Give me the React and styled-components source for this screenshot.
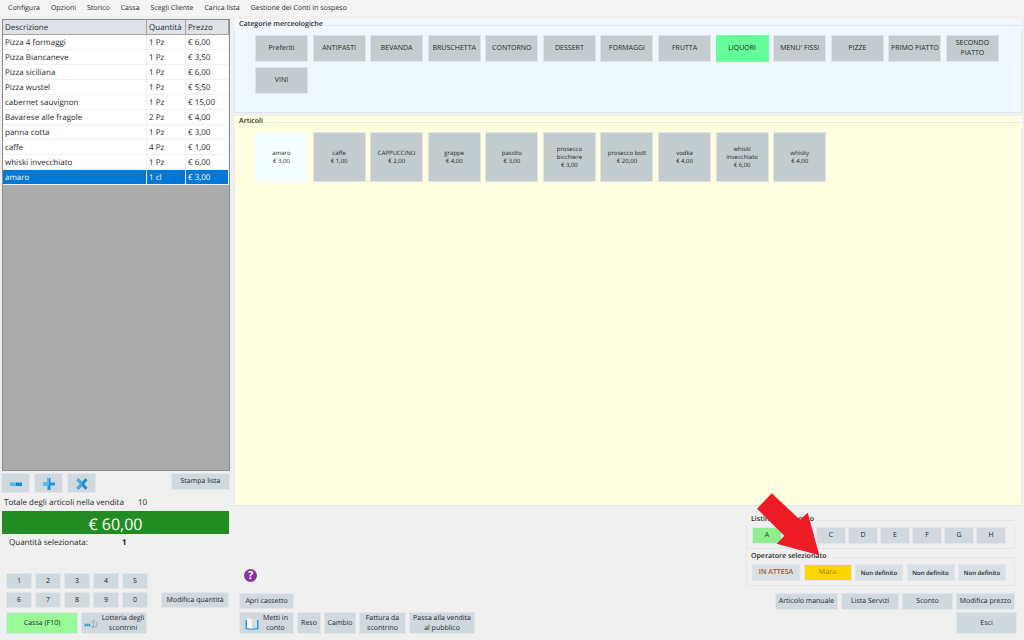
import { useState } from 'react';
import styled, { createGlobalStyle } from 'styled-components';

const GlobalStyle = createGlobalStyle`
  * {
    box-sizing: border-box;
  }

  body {
    margin: 0;
    background: #f0f0f0;
    color: #1e1e1e;
    font-family: 'Open Sans', 'Noto Sans', sans-serif;
    font-size: 7px;
    line-height: 9px;
    text-rendering: geometricPrecision;
  }

  button {
    font: inherit;
    color: inherit;
    text-rendering: inherit;
    padding: 0;
    border: none;
    cursor: pointer;
  }
`;

const Page = styled.div`
  min-height: 100vh;
  display: flex;
  flex-direction: column;
`;

const MenuBar = styled.nav`
  display: flex;
  gap: 11px;
  height: 16px;
  padding-left: 8px;
  background: #f4f4f4;
`;

const MenuButton = styled.button`
  padding-top: 1px;
  background: none;
`;

const Main = styled.div`
  flex: 1;
  display: grid;
  grid-template-columns: 230px 1fr;
  gap: 4px;
`;

const LeftColumn = styled.aside`
  display: flex;
  flex-direction: column;
  padding: 3px 0 6px 1px;
`;

const RightColumn = styled.main`
  display: flex;
  flex-direction: column;
  padding: 3px 2px 6px 0;
`;

const ListArea = styled.div`
  flex: 1;
  margin-left: 1px;
  background: #ababab;
  border: 1px solid #8c8c8c;
`;

const SaleTable = styled.table`
  width: 100%;
  table-layout: fixed;
  border-collapse: separate;
  border-spacing: 0;
  font-size: 8px;
  line-height: 12px;

  th {
    height: 15px;
    padding: 2px 2px 0;
    text-align: left;
    font-weight: normal;
    background: #dfe3e8;
    border-right: 1px solid #a0a0a0;
    border-bottom: 1px solid #a0a0a0;
  }

  td {
    height: 15px;
    padding: 2px 2px 0;
    white-space: nowrap;
    border-right: 1px solid #f0f0f0;
    border-bottom: 1px solid #f0f0f0;
  }
`;

const SaleRow = styled.tr`
  background: ${({ $selected }) => ($selected ? '#0078d7' : '#fff')};
  color: ${({ $selected }) => ($selected ? '#fff' : 'inherit')};
  cursor: pointer;
`;

const Button = styled.button`
  display: flex;
  align-items: center;
  justify-content: center;
  gap: 4px;
  width: ${({ $width }) => ($width ? `${$width}px` : 'auto')};
  height: ${({ $height }) => $height || 17}px;
  padding-top: 1px;
  background: ${({ $color }) => $color || '#cfd9de'};
  border: 1px solid #e0e6e9;
  line-height: 10px;
  white-space: nowrap;
`;

const OperatorButton = styled(Button)`
  color: ${({ $text }) => $text || 'inherit'};
  font-size: ${({ $small }) => ($small ? 6 : 7)}px;
  font-weight: 600;
`;

const Bar = styled.div`
  display: flex;
  gap: ${({ $gap }) => $gap || 3}px;
  align-items: flex-start;
`;

const Push = styled.div`
  margin-left: auto;
`;

const ListTools = styled(Bar)`
  padding-top: 2px;
`;

const Info = styled.div`
  display: flex;
  gap: 14px;
  padding: 3px 3px 1px;
  font-size: 8px;
  line-height: 14px;
`;

const Total = styled.output`
  display: block;
  height: 23px;
  margin: 0 1px;
  background: #228b22;
  color: #fff;
  text-align: center;
  font-size: 16px;
  line-height: 26px;
`;

const Quantity = styled.div`
  display: flex;
  gap: 34px;
  height: 39px;
  padding: 2px 8px;
  font-size: 8px;
  line-height: 14px;
`;

const KeypadRow = styled.div`
  display: flex;
  justify-content: space-between;
  align-items: flex-end;
  padding: 0 1px 4px 5px;
`;

const Keypad = styled.div`
  display: grid;
  grid-template-columns: repeat(5, 26px);
  gap: 3px;
`;

const CheckoutRow = styled(Bar)`
  padding-left: 5px;
`;

const Panel = styled.section`
  display: flex;
  flex-direction: column;
  flex: ${({ $grow }) => ($grow ? 1 : 'none')};
  margin-bottom: ${({ $grow }) => ($grow ? 0 : 3)}px;
  background: ${({ $color }) => $color || 'transparent'};
`;

const PanelTitle = styled.h2`
  display: flex;
  align-items: center;
  gap: 2px;
  margin: 0;
  padding-left: 5px;
  font-size: 7px;
  font-weight: 600;
  line-height: 12px;
  white-space: nowrap;

  &::after {
    content: '';
    flex: 1;
    border-top: 1px solid #e2e6e8;
  }
`;

const PanelBody = styled.div`
  flex: 1;
  border: solid #e2e6e8;
  border-width: 0 1px 1px;
  padding: ${({ $pad }) => $pad || '4px 22px 6px 20px'};
`;

const TileGrid = styled.div`
  display: grid;
  grid-template-columns: repeat(auto-fill, 53px);
  grid-auto-rows: ${({ $height }) => $height}px;
  row-gap: 5px;
  column-gap: calc((100% - 13 * 53px) / 12);
  min-height: ${({ $min }) => $min || 0}px;
`;

const Tile = styled.button`
  display: flex;
  flex-direction: column;
  align-items: center;
  justify-content: center;
  padding-top: 1px;
  background: ${({ $active, $accent }) => ($active ? $accent : '#c3cdcf')};
  border: 1px solid ${({ $active, $accent }) => ($active ? $accent : '#dde5e8')};
  line-height: 10px;
`;

const ArticleTile = styled(Tile)`
  padding: 0 3px;
  font-size: 6px;
  line-height: 8px;
`;

const Footer = styled.footer`
  display: flex;
  justify-content: space-between;
  align-items: flex-end;
  padding: 8px 5px 0;
`;

const Actions = styled.div`
  display: flex;
  flex-direction: column;
  align-items: flex-start;
  gap: 3px;
`;

const HelpButton = styled.button`
  width: 13px;
  height: 13px;
  margin: 0 0 8px 5px;
  border-radius: 50%;
  background: #9030a4;
  color: #fff;
  font-size: 11px;
  font-weight: 700;
  line-height: 13px;
`;

const Options = styled.div`
  position: relative;
  display: flex;
  flex-direction: column;
  align-items: flex-end;
  gap: 2px;
`;

const OptionPanel = styled(Panel)`
  width: 269px;
  margin: 0 2px 0 0;
`;

const OptionRow = styled(Bar)`
  justify-content: space-between;
`;

const PriceActions = styled(Bar)`
  padding: 5px 2px 0 0;
`;

const Arrow = styled.svg`
  position: absolute;
  left: 10px;
  top: -21px;
  width: 64px;
  height: 64px;
  pointer-events: none;
`;

const menus = ['Configura', 'Opzioni', 'Storico', 'Cassa', 'Scegli Cliente', 'Carica lista', 'Gestione dei Conti in sospeso'];

const sales = [
  ['Pizza 4 formaggi', '1 Pz', '€ 6,00'],
  ['Pizza Biancaneve', '1 Pz', '€ 3,50'],
  ['Pizza siciliana', '1 Pz', '€ 6,00'],
  ['Pizza wustel', '1 Pz', '€ 5,50'],
  ['cabernet sauvignon', '1 Pz', '€ 15,00'],
  ['Bavarese alle fragole', '2 Pz', '€ 4,00'],
  ['panna cotta', '1 Pz', '€ 3,00'],
  ['caffe', '4 Pz', '€ 1,00'],
  ['whiski invecchiato', '1 Pz', '€ 6,00'],
  ['amaro', '1 cl', '€ 3,00']
];

const categories = [
  'Preferiti', 'ANTIPASTI', 'BEVANDA', 'BRUSCHETTA', 'CONTORNO', 'DESSERT', 'FORMAGGI',
  'FRUTTA', 'LIQUORI', "MENU' FISSI", 'PIZZE', 'PRIMO PIATTO', 'SECONDO PIATTO', 'VINI'
];

const articles = [
  ['amaro', '€ 3,00'],
  ['caffe', '€ 1,00'],
  ['CAPPUCCINO', '€ 2,00'],
  ['grappe', '€ 4,00'],
  ['passito', '€ 3,00'],
  ['prosecco bicchiere', '€ 3,00'],
  ['prosecco bott', '€ 20,00'],
  ['vodka', '€ 4,00'],
  ['whiski invecchiato', '€ 6,00'],
  ['whisky', '€ 4,00']
];

const operators = ['IN ATTESA', 'Mara', 'Non definito', 'Non definito', 'Non definito'];

const MinusIcon = () => (
  <svg width="14" height="14" viewBox="0 0 14 14">
    <path d="M1 5.500h6v3.500H1z" fill="#55b9f3" />
    <path d="M7 5.500h6v3.500H7z" fill="#1687d9" />
  </svg>
);

const PlusIcon = () => (
  <svg width="14" height="14" viewBox="0 0 14 14">
    <path d="M1 5.500h4.500V1h3v4.500H13v3H8.500V13h-3V8.500H1z" fill="#1f93e0" />
    <path d="M1 5.500h4.500V1H7v7.500H1z" fill="#58b8ef" />
  </svg>
);

const CrossIcon = () => (
  <svg width="14" height="14" viewBox="0 0 14 14">
    <path d="M1.500 3.200l2-1.900L7 5l3.500-3.700 2 1.900L9 7l3.500 3.800-2 1.900L7 9l-3.500 3.700-2-1.900L5 7z" fill="#1687d9" />
    <path d="M1.500 3.200l2-1.900L7 5v4l-3.500 3.700-2-1.900L5 7z" fill="#45acec" />
  </svg>
);

const TextCursorIcon = () => (
  <svg width="14" height="10" viewBox="0 0 14 10">
    <path d="M.5 6h6" stroke="#3794d0" strokeWidth="2.500" strokeDasharray="1.700 .4" />
    <path d="M7 3.500h1.500M7 7.500h1.500M9.500 1.500v7M8.300 1.500h2.400M8.300 8.500h2.400M10.700 3.500h2.300v4h-2.300" fill="none" stroke="#8fa7b4" strokeWidth=".8" />
  </svg>
);

const BookIcon = () => (
  <svg width="14" height="14" viewBox="0 0 14 14">
    <path d="M.5 3v9.500H6l1 .7 1-.7h5.500V3z" fill="#2999dc" />
    <path d="M2 1.500C4 1 6 1.500 7 3v9C5.500 11 4 11 2 11.300z" fill="#f7fafb" />
    <path d="M12 1.500C10 1 8 1.500 7 3v9c1.500-1 3-1 5-.7z" fill="#d3dcdf" />
  </svg>
);

const App = () => {
  const [selectedRow, setSelectedRow] = useState(9);
  const [category, setCategory] = useState('LIQUORI');
  const [article, setArticle] = useState('amaro');
  const [priceList, setPriceList] = useState('A');

  return (
    <Page>
      <GlobalStyle />
      <MenuBar>
        {menus.map((menu) => (
          <MenuButton key={menu}>{menu}</MenuButton>
        ))}
      </MenuBar>
      <Main>
        <LeftColumn>
          <ListArea>
            <SaleTable>
              <colgroup>
                <col />
                <col width="39" />
                <col width="43" />
              </colgroup>
              <thead>
                <tr>
                  <th>Descrizione</th>
                  <th>Quantità</th>
                  <th>Prezzo</th>
                </tr>
              </thead>
              <tbody>
                {sales.map((row, index) => (
                  <SaleRow key={row[0]} $selected={index === selectedRow} onClick={() => setSelectedRow(index)}>
                    {row.map((cell) => (
                      <td key={cell}>{cell}</td>
                    ))}
                  </SaleRow>
                ))}
              </tbody>
            </SaleTable>
          </ListArea>
          <ListTools $gap={4}>
            <Button $width={29} $height={20} aria-label="Meno"><MinusIcon /></Button>
            <Button $width={29} $height={20} aria-label="Più"><PlusIcon /></Button>
            <Button $width={29} $height={20} aria-label="Elimina"><CrossIcon /></Button>
            <Push>
              <Button $width={59}>Stampa lista</Button>
            </Push>
          </ListTools>
          <Info>
            <span>Totale degli articoli nella vendita</span>
            <span>10</span>
          </Info>
          <Total>€ 60,00</Total>
          <Quantity>
            <span>Quantità selezionata:</span>
            <strong>1</strong>
          </Quantity>
          <KeypadRow>
            <Keypad>
              {[1, 2, 3, 4, 5, 6, 7, 8, 9, 0].map((key) => (
                <Button key={key} $height={16}>{key}</Button>
              ))}
            </Keypad>
            <Button $width={68} $height={16}>Modifica quantità</Button>
          </KeypadRow>
          <CheckoutRow>
            <Button $width={72} $height={22} $color="#98fb98">Cassa (F10)</Button>
            <Button $width={66} $height={22}>
              <TextCursorIcon />
              <span>Lotteria degli<br />scontrini</span>
            </Button>
          </CheckoutRow>
        </LeftColumn>
        <RightColumn>
          <Panel $color="#f0f8ff">
            <PanelTitle>Categorie merceologiche</PanelTitle>
            <PanelBody>
              <TileGrid $height={27} $min={71}>
                {categories.map((name) => (
                  <Tile key={name} $active={name === category} $accent="#66ff99" onClick={() => setCategory(name)}>
                    {name}
                  </Tile>
                ))}
              </TileGrid>
            </PanelBody>
          </Panel>
          <Panel $color="#ffffe0" $grow>
            <PanelTitle>Articoli</PanelTitle>
            <PanelBody>
              <TileGrid $height={50}>
                {articles.map(([name, price]) => (
                  <ArticleTile key={name} $active={name === article} $accent="#f5ffff" onClick={() => setArticle(name)}>
                    <span>{name}</span>
                    <span>{price}</span>
                  </ArticleTile>
                ))}
              </TileGrid>
            </PanelBody>
          </Panel>
          <Footer>
            <Actions>
              <HelpButton aria-label="Aiuto">?</HelpButton>
              <Button $width={55} $height={16}>Apri cassetto</Button>
              <Bar>
                <Button $width={55} $height={22}>
                  <BookIcon />
                  <span>Metti in<br />conto</span>
                </Button>
                <Button $width={24} $height={22}>Reso</Button>
                <Button $width={32} $height={22}>Cambio</Button>
                <Button $width={47} $height={22}>Fattura da<br />scontrino</Button>
                <Button $width={66} $height={22}>Passa alla vendita<br />al pubblico</Button>
              </Bar>
            </Actions>
            <Options>
              <OptionPanel>
                <PanelTitle>Listino selezionato</PanelTitle>
                <PanelBody $pad="1px 8px 4px 5px">
                  <OptionRow $gap={2}>
                    {['A', 'B', 'C', 'D', 'E', 'F', 'G', 'H'].map((name) => (
                      <Button
                        key={name}
                        $width={30}
                        $color={name === priceList ? '#90ee90' : undefined}
                        onClick={() => setPriceList(name)}
                      >
                        {name}
                      </Button>
                    ))}
                  </OptionRow>
                </PanelBody>
              </OptionPanel>
              <OptionPanel>
                <PanelTitle>Operatore selezionato</PanelTitle>
                <PanelBody $pad="1px 8px 4px 5px">
                  <OptionRow>
                    {operators.map((name, index) => (
                      <OperatorButton
                        key={index}
                        $width={48}
                        $small={index > 1}
                        $color={index === 1 ? '#ffd700' : '#d8e0e3'}
                        $text={['#a0522d', '#c8860b'][index]}
                      >
                        {name}
                      </OperatorButton>
                    ))}
                  </OptionRow>
                </PanelBody>
              </OptionPanel>
              <PriceActions>
                <Button $width={63}>Articolo manuale</Button>
                <Button $width={58}>Lista Servizi</Button>
                <Button $width={51}>Sconto</Button>
                <Button $width={59}>Modifica prezzo</Button>
              </PriceActions>
              <Button $width={61} $height={22}>Esci</Button>
              <Arrow viewBox="0 0 64 64">
                <path d="M15.700 .3L44 26.700l7.700-7L63.300 62.300 20.700 50.700l7.600-8L1 15.700z" fill="#ed1c24" />
              </Arrow>
            </Options>
          </Footer>
        </RightColumn>
      </Main>
    </Page>
  );
};

export default App;
